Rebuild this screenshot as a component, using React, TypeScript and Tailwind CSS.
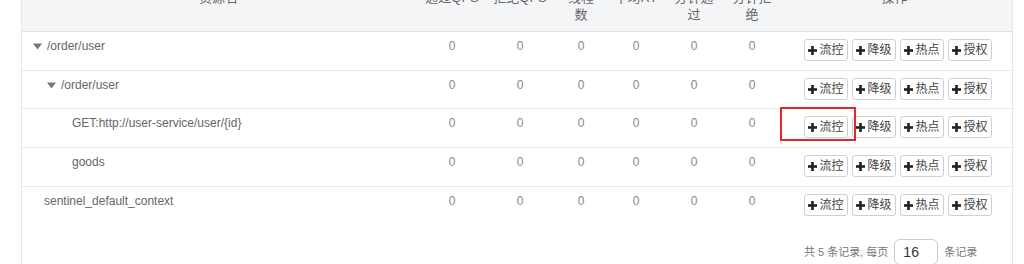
import React from "react";

type Row = {
  name: string;
  toggle: boolean;
  nameLeft: string;
  height: string;
  marked?: boolean;
};

const rows: Row[] = [
  { name: "/order/user", toggle: true, nameLeft: "pl-[11px]", height: "h-[39px]" },
  { name: "/order/user", toggle: true, nameLeft: "pl-[25px]", height: "h-[38px]" },
  { name: "GET:http://user-service/user/{id}", toggle: false, nameLeft: "pl-[50px]", height: "h-[39px]", marked: true },
  { name: "goods", toggle: false, nameLeft: "pl-[50px]", height: "h-[39px]" },
  { name: "sentinel_default_context", toggle: false, nameLeft: "pl-[22px]", height: "h-[39px]" },
];

const cols = "grid grid-cols-[393px_74px_62px_60px_50px_66px_50px_1fr]";

function Plus() {
  return (
    <svg width="9" height="9" viewBox="0 0 9 9" className="shrink-0">
      <rect x="3.2" y="0" width="2.6" height="9" fill="#222" />
      <rect x="0" y="3.2" width="9" height="2.6" fill="#222" />
    </svg>
  );
}

function Caret() {
  return (
    <svg width="9" height="7" viewBox="0 0 9 7" className="mr-[5px] shrink-0">
      <path d="M0 0.5 L9 0.5 L4.5 6.5 Z" fill="#777" />
    </svg>
  );
}

function OpButton({ label }: { label: string }) {
  return (
    <button className="flex h-[22px] w-[44px] items-center justify-center gap-[2px] rounded-[3px] border border-[#cfcfcf] bg-white text-[12px] leading-none text-[#444]">
      <Plus />
      <span>{label}</span>
    </button>
  );
}

export default function App() {
  return (
    <div className="h-[264px] w-[1024px] overflow-hidden bg-white font-['Liberation_Sans','Noto_Sans_CJK_SC',sans-serif]">
      <div className="ml-[21px] w-[992px] border-x border-[#e6e6e6]">
        <div className={`${cols} -mt-[19px] border-b border-[#e2e2e2] bg-[#f4f5f7] pb-[8px] pt-[8px] text-[13px] leading-[17px] text-[#666]`}>
          <div className="text-center">资源名</div>
          <div className="text-center">通过QPS</div>
          <div className="text-center">拒绝QPS</div>
          <div className="text-center">
            线程
            <br />数
          </div>
          <div className="text-center">平均RT</div>
          <div className="text-center">
            分钟通
            <br />过
          </div>
          <div className="text-center">
            分钟拒
            <br />绝
          </div>
          <div className="text-center">操作</div>
        </div>

        {rows.map((r, i) => (
          <div
            key={i}
            className={`${cols} relative ${r.height} text-[12px] ${i < rows.length - 1 ? "border-b border-[#e8e8e8]" : ""}`}
          >
            <div className={`flex items-start pt-[6px] leading-[17px] text-[#666] ${r.nameLeft}`}>
              {r.toggle && (
                <span className="flex h-[17px] items-center">
                  <Caret />
                </span>
              )}
              <span>{r.name}</span>
            </div>
            {[0, 1, 2, 3, 4, 5].map((c) => (
              <div key={c} className="pt-[6px] text-center leading-[17px] text-[#888]">
                0
              </div>
            ))}
            <div className="flex gap-[4px] pl-[27px] pt-[7px]">
              <OpButton label="流控" />
              <OpButton label="降级" />
              <OpButton label="热点" />
              <OpButton label="授权" />
            </div>
            {r.marked && (
              <div className="absolute left-[758px] top-[-2px] h-[34px] w-[76px] border-2 border-[#e3262b]" />
            )}
          </div>
        ))}

        <div className="flex items-center pb-[6px] pl-[782px] pt-[13px] text-[11px] text-[#777]">
          <span>共 5 条记录, 每页</span>
          <div className="mx-[6px] flex h-[26px] w-[44px] items-center rounded-[6px] border border-[#ccc] pl-[8px] text-[14px] text-[#333]">
            16
          </div>
          <span>条记录</span>
        </div>
      </div>
    </div>
  );
}
